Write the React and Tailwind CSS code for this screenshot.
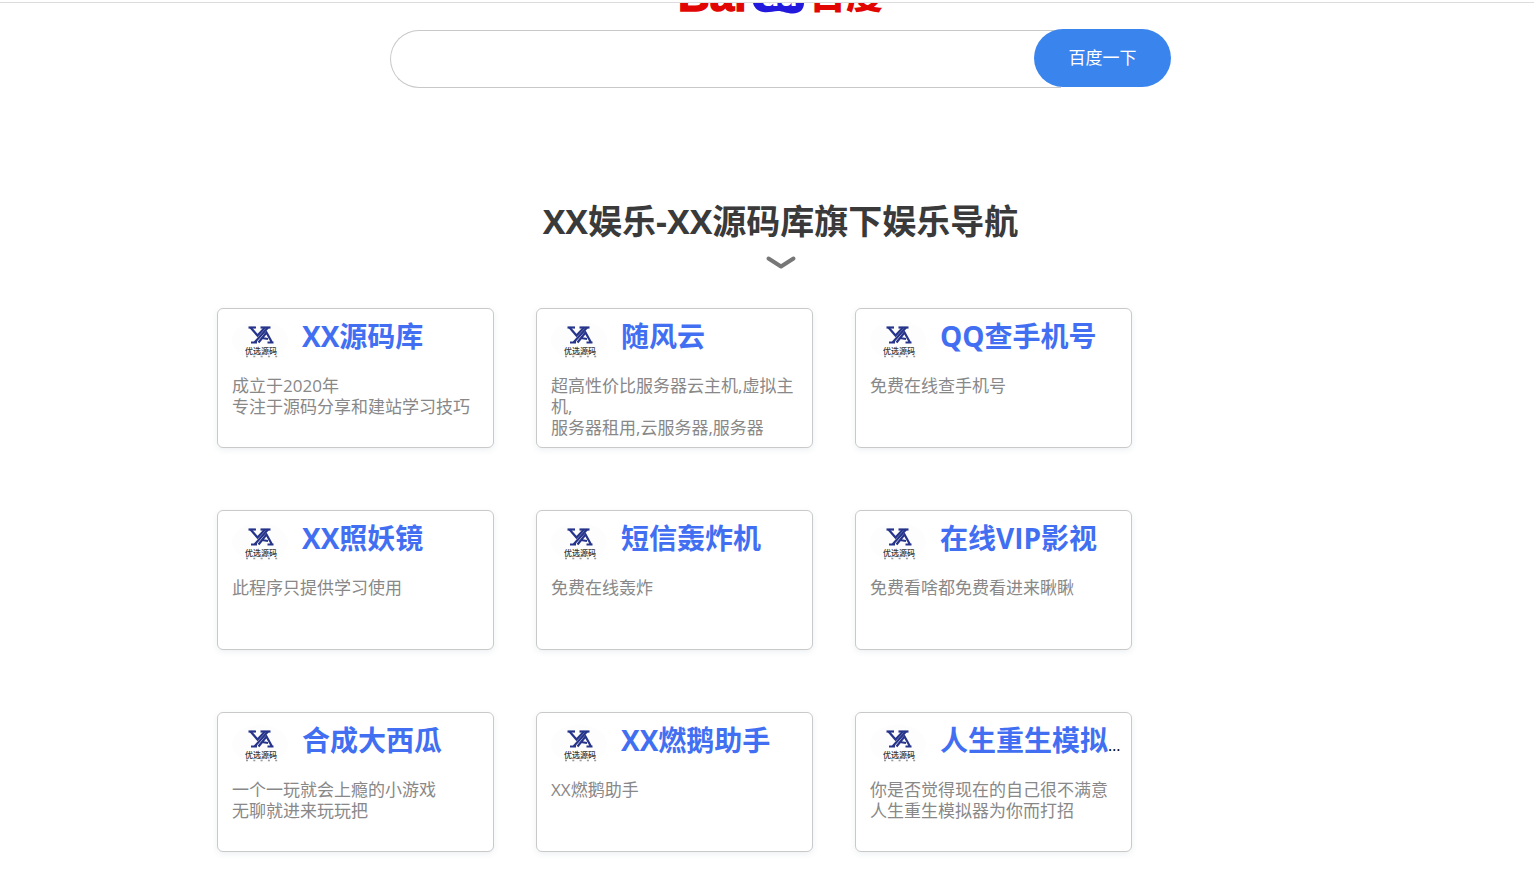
const sites = [
  { name: 'XX源码库', lines: ['成立于2020年', '专注于源码分享和建站学习技巧'] },
  { name: '随风云', lines: ['超高性价比服务器云主机,虚拟主机,', '服务器租用,云服务器,服务器'] },
  { name: 'QQ查手机号', lines: ['免费在线查手机号'] },
  { name: 'XX照妖镜', lines: ['此程序只提供学习使用'] },
  { name: '短信轰炸机', lines: ['免费在线轰炸'] },
  { name: '在线VIP影视', lines: ['免费看啥都免费看进来瞅瞅'] },
  { name: '合成大西瓜', lines: ['一个一玩就会上瘾的小游戏', '无聊就进来玩玩把'] },
  { name: 'XX燃鹅助手', lines: ['XX燃鹅助手'] },
  { name: '人生重生模拟器', lines: ['你是否觉得现在的自己很不满意', '人生重生模拟器为你而打招'] },
];

function SearchLogo() {
  return (
    <svg width="208" height="11" viewBox="0 0 208 11" className="block overflow-hidden" role="img" aria-label="Baidu 百度">
      <text x="1" y="8" fontSize="44" fontWeight="700" fill="#e10602" stroke="#e10602" strokeWidth="1.5" className="font-['Liberation_Sans',sans-serif]">Bai</text>
      <path d="M76 -6H127V0C127 7 122 10.500 116 10.500C109 10.500 106 8 101 8C96 8 92 10 86 9C80 8 77 4 76 0Z" fill="#2319dc" />
      <text x="84" y="3" fontSize="30" fontWeight="700" fill="#fff" className="font-['Liberation_Sans',sans-serif]">du</text>
      <text x="132" y="6" fontSize="37" fontWeight="900" fill="#e10602" className="font-['Noto_Sans_CJK_SC',sans-serif]">百度</text>
    </svg>
  );
}

function SiteLogo() {
  return (
    <svg width="56" height="40" viewBox="0 0 56 40" className="shrink-0" aria-hidden="true">
      <ellipse cx="28" cy="20" rx="28" ry="19" fill="#fdfdfd" />
      <g fill="none" stroke="#26348b" strokeWidth="2.2">
        <path d="M16.500 7.500H24" />
        <path d="M18.500 7.500L25.500 15.500L33 7.500" />
        <path d="M28.500 7.500H38.500" />
        <path d="M36 7.500L22.500 22.500M19 22.500H25" />
        <path d="M26.500 22.500L34.500 12.500L40 22.500M35.500 22.500H41.500M30 18L36 19" />
      </g>
      <text x="29" y="34" fontSize="8" fontWeight="500" textAnchor="middle" fill="#333" className="font-['Noto_Sans_CJK_SC',sans-serif]">优选源码</text>
      <path d="M14 36.500H46" stroke="#999" strokeWidth="1.500" strokeDasharray="2 5.300" />
    </svg>
  );
}

function SiteCard({ site }) {
  return (
    <article className="h-[140px] rounded-md border border-[#c9c9c9] bg-white pl-[14px] pr-[10px] pt-[7px] shadow-[0_2px_6px_rgba(0,60,90,0.08)]">
      <div className="flex h-[46px] gap-[14px]">
        <div className="pt-1"><SiteLogo /></div>
        <h2 className="min-w-0 flex-1 truncate text-base leading-10 text-black">
          <a href="#" className="text-[28px] font-bold text-[#426ff2]">{site.name}</a>
        </h2>
      </div>
      <p className="mt-[13px] text-[17px] leading-[21px] text-[#888]">
        {site.lines.map((line) => <span key={line} className="block">{line}</span>)}
      </p>
    </article>
  );
}

export default function App() {
  return (
    <div className="min-h-screen bg-white pt-[2px] font-['Open_Sans','Noto_Sans_CJK_SC',sans-serif]">
      <header className="flex justify-center border-t border-[#dcdcdc] pl-[27px]">
        <SearchLogo />
      </header>
      <main className="pb-5 pl-[27px]">
        <form className="mx-auto mt-[15px] flex h-[59px] max-w-[781px] items-start">
          <input aria-label="搜索" type="text" className="-mr-[27px] mt-px h-[58px] min-w-0 flex-1 rounded-l-full border border-r-0 border-[#c8c8c8] pl-6 pr-8 outline-none" />
          <button type="button" className="relative h-[58px] w-[137px] rounded-full bg-[#3a84ee] text-[17px] text-white">百度一下</button>
        </form>
        <h1 className="mt-[109px] text-center text-[34px] font-bold leading-[48px] text-[#3a3a3a]">XX娱乐-XX源码库旗下娱乐导航</h1>
        <svg width="32" height="16" viewBox="0 0 32 16" className="mx-auto mt-[10px] block" aria-hidden="true">
          <path d="M3.500 3.500L16 11.500L28.500 3.500" fill="none" stroke="#777" strokeWidth="4" strokeLinecap="round" strokeLinejoin="round" />
        </svg>
        <section className="mx-auto mt-[37px] grid max-w-[1127px] grid-cols-[repeat(auto-fill,277px)] gap-x-[42px] gap-y-[62px]">
          {sites.map((site) => <SiteCard key={site.name} site={site} />)}
        </section>
      </main>
    </div>
  );
}
